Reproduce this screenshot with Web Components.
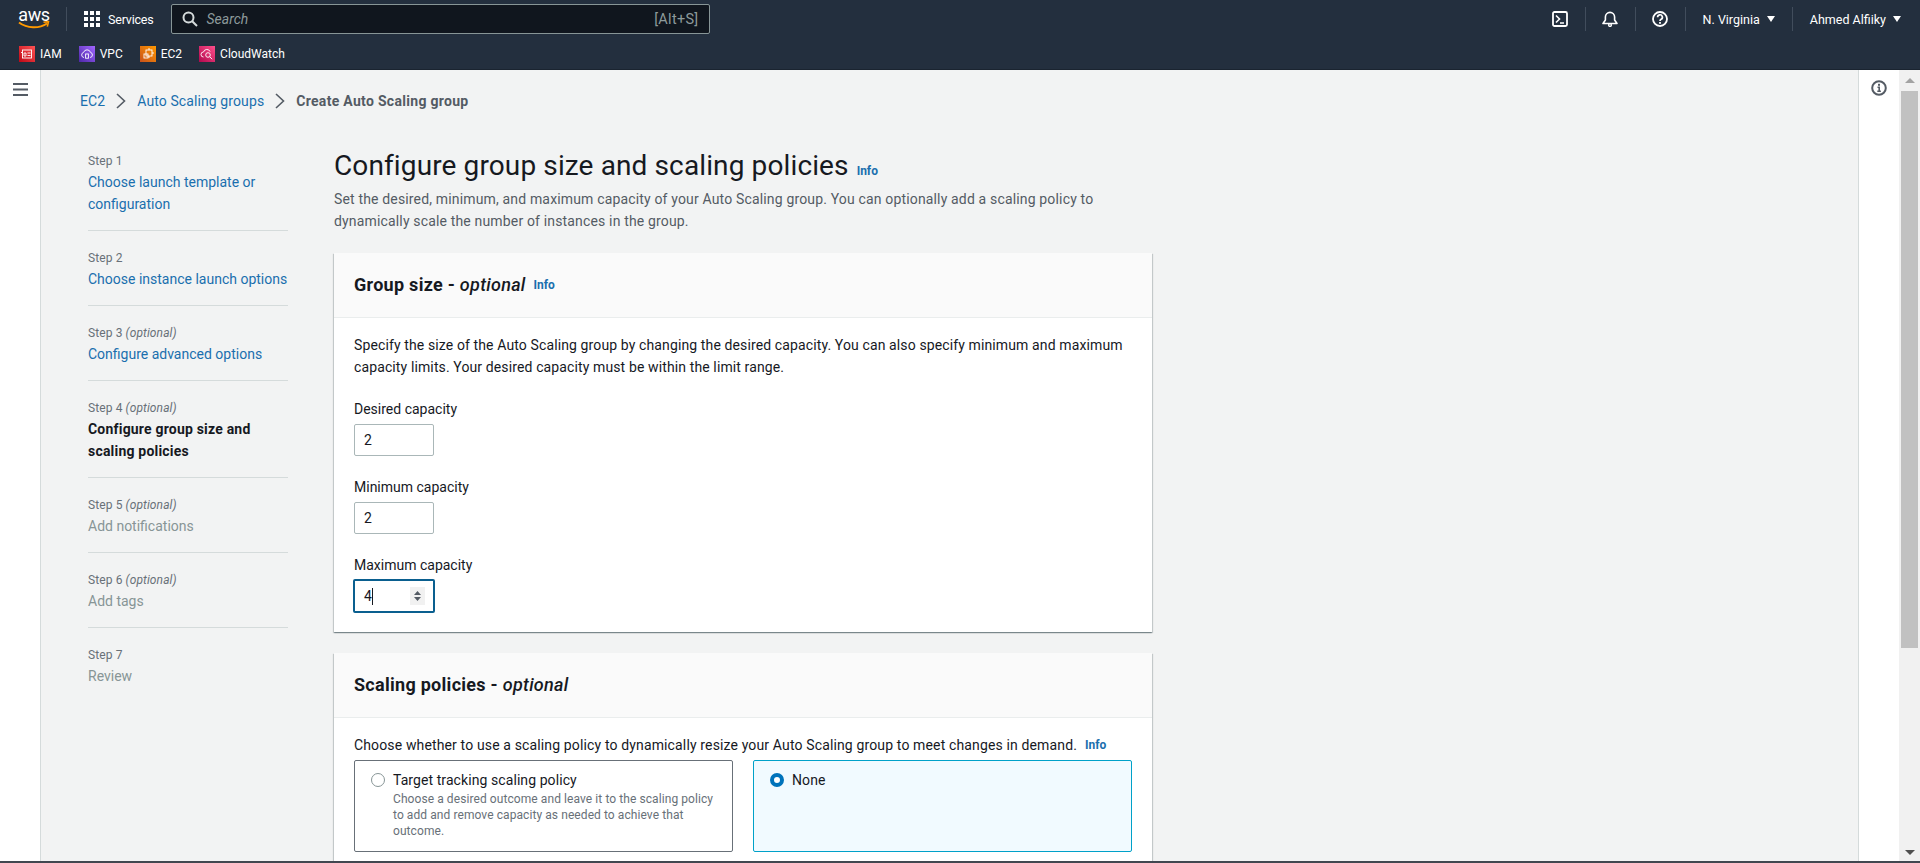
<!DOCTYPE html>
<html>
<head>
<meta charset="utf-8">
<title>Create Auto Scaling group</title>
<style>
html,body{margin:0;height:100%;overflow:hidden;}
body{font-family:Roboto,"Liberation Sans",sans-serif;font-size:14px;color:#16191f;background:#f2f3f3;display:flex;flex-direction:column;height:863px;}
p.copy{letter-spacing:.12px;}
</style>
</head>
<body>
<aws-topnav></aws-topnav>
<aws-favbar>
  <fav-item label="IAM" c1="#bd0816" c2="#ff5252" glyph="iam"></fav-item>
  <fav-item label="VPC" c1="#4d27a8" c2="#a166ff" glyph="vpc"></fav-item>
  <fav-item label="EC2" c1="#c8511b" c2="#ff9900" glyph="ec2"></fav-item>
  <fav-item label="CloudWatch" c1="#b0084d" c2="#ff4f8b" glyph="cw"></fav-item>
</aws-favbar>
<app-shell>
  <bread-crumbs></bread-crumbs>
  <wizard-steps>
    <wizard-step step="Step 1" link>Choose launch template or configuration</wizard-step>
    <wizard-step step="Step 2" link>Choose instance launch options</wizard-step>
    <wizard-step step="Step 3" optional link>Configure advanced options</wizard-step>
    <wizard-step step="Step 4" optional current>Configure group size and scaling policies</wizard-step>
    <wizard-step step="Step 5" optional>Add notifications</wizard-step>
    <wizard-step step="Step 6" optional>Add tags</wizard-step>
    <wizard-step step="Step 7" last>Review</wizard-step>
  </wizard-steps>
  <form-page>
    <aws-card heading="Group size" info>
      <p class="copy">Specify the size of the Auto Scaling group by changing the desired capacity. You can also specify minimum and maximum capacity limits. Your desired capacity must be within the limit range.</p>
      <cap-field label="Desired capacity" value="2"></cap-field>
      <cap-field label="Minimum capacity" value="2"></cap-field>
      <cap-field label="Maximum capacity" value="4" focused></cap-field>
    </aws-card>
    <aws-card heading="Scaling policies">
      <policy-chooser></policy-chooser>
    </aws-card>
  </form-page>
</app-shell>
<script>
const chevron = `<svg width="10" height="16" viewBox="0 0 10 16" fill="none" stroke="#545b64" stroke-width="1.6"><path d="M1 1l7.5 7L1 15"/></svg>`;

class AwsTopnav extends HTMLElement{
    constructor(){
        super();
        this.attachShadow({mode:"open"}).innerHTML = `
        <style>
        :host{display:flex;align-items:center;height:40px;padding-bottom:2px;box-sizing:border-box;background:#232f3e;color:#fff;font-size:12.5px;flex:none;}
        .logo{width:32px;height:24px;margin-left:18px;margin-right:16px;position:relative;flex:none;display:flex;justify-content:center;}
        .logo span{font:400 18px/18px Roboto,sans-serif;letter-spacing:-.3px;margin-top:-1px;}
        .logo svg{position:absolute;left:0;top:14px;}
        .sep{width:1px;height:24px;background:#414d5c;flex:none;}
        .services{display:flex;align-items:center;gap:8px;margin:0 17px;letter-spacing:-.2px;}
        .search{width:537px;height:28px;border:1px solid #879596;border-radius:2px;background:#10161e;display:flex;align-items:center;flex:none;}
        .search svg{margin:0 9px 0 10px;}
        .search i{color:#8d9a9b;flex:1;font-size:14px;}
        .search b{font-weight:400;color:#8d9a9b;margin-right:10px;font-size:14.5px;letter-spacing:.3px;}
        .right{margin-left:auto;display:flex;align-items:center;}
        .ico{width:50px;display:flex;justify-content:center;align-items:center;height:24px;border-right:1px solid #414d5c;box-sizing:border-box;}
        .menu{display:flex;align-items:center;gap:7px;height:24px;}
        .region{padding:0 17px;border-right:1px solid #414d5c;}
        .user{padding:0 19px 0 17px;}
        .caret{width:0;height:0;border:4px solid transparent;border-top:6px solid #fff;border-bottom:0;}
        </style>
        <div class="logo"><span>aws</span><svg width="32" height="10" viewBox="0 0 32 10" fill="none"><path d="M1 1.5C9 7.5 21 8 29 2.5" stroke="#f90" stroke-width="2"/><path d="M25.5 1.2l5-.6-1.2 5" stroke="#f90" stroke-width="1.6"/></svg></div>
        <div class="sep"></div>
        <div class="services">
          <svg width="16" height="16" viewBox="0 0 16 16" fill="#fff"><rect width="4" height="4"/><rect x="6" width="4" height="4"/><rect x="12" width="4" height="4"/><rect y="6" width="4" height="4"/><rect x="6" y="6" width="4" height="4"/><rect x="12" y="6" width="4" height="4"/><rect y="12" width="4" height="4"/><rect x="6" y="12" width="4" height="4"/><rect x="12" y="12" width="4" height="4"/></svg>
          <span>Services</span>
        </div>
        <div class="search">
          <svg width="16" height="16" viewBox="0 0 16 16" fill="none" stroke="#d5dbdb" stroke-width="2"><circle cx="6.5" cy="6.5" r="5"/><path d="M10.2 10.2L15 15"/></svg>
          <i>Search</i><b>[Alt+S]</b>
        </div>
        <div class="right">
          <div class="ico"><svg width="16" height="16" viewBox="0 0 16 16" fill="none" stroke="#fff" stroke-width="1.8"><rect x="1" y="1" width="14" height="14" rx="1.5"/><path d="M4 4.5L7.5 8 4 11.5M8 12h4" stroke-width="1.6"/></svg></div>
          <div class="ico"><svg width="16" height="16" viewBox="0 0 16 16" fill="none" stroke="#fff" stroke-width="1.6"><path d="M1 12.5h14L12.6 9V6a4.6 4.6 0 0 0-9.2 0v3z" stroke-linejoin="round"/><circle cx="8" cy="14" r="1.4" stroke-width="1.4"/></svg></div>
          <div class="ico"><svg width="16" height="16" viewBox="0 0 16 16" fill="none" stroke="#fff" stroke-width="1.8"><circle cx="8" cy="8" r="7"/><path d="M5.6 6.2a2.4 2.4 0 1 1 3.5 2.1c-.8.4-1.1.8-1.1 1.7" stroke-width="1.7"/><rect x="7.1" y="11" width="1.8" height="1.8" fill="#fff" stroke="none"/></svg></div>
          <div class="menu region"><span>N. Virginia</span><span class="caret"></span></div>
          <div class="menu user"><span>Ahmed Alfiiky</span><span class="caret"></span></div>
        </div>`;
    }
}
customElements.define("aws-topnav",AwsTopnav);

class AwsFavbar extends HTMLElement{
    constructor(){
        super();
        this.attachShadow({mode:"open"}).innerHTML = `
        <style>
        :host{display:flex;align-items:center;gap:17px;height:28px;padding:0 0 1px 19px;background:#232f3e;border-bottom:1px solid #1a2430;flex:none;}
        </style>
        <slot></slot>`;
    }
}
customElements.define("aws-favbar",AwsFavbar);

class FavItem extends HTMLElement{
    constructor(){
        super();
        const glyphs = {
            iam:`<rect x="3.5" y="4" width="9" height="8"/><path d="M5 7h2v3H5zM8.5 7h3M8.5 9.5h3M2 6.5h1.5"/>`,
            vpc:`<path d="M5 11.5a2.6 2.6 0 0 1-.4-5.1 3.6 3.6 0 0 1 6.9 0 2.6 2.6 0 0 1-.4 5.1"/><rect x="6.6" y="8" width="2.8" height="4.2"/>`,
            ec2:`<rect x="6" y="4" width="6" height="6"/><rect x="4" y="8" width="4" height="4"/><path d="M9 2v2M9 10v2M12 7h2"/>`,
            cw:`<path d="M4.5 11a2.5 2.5 0 0 1 0-5 3.5 3.5 0 0 1 6.6-.4"/><circle cx="9" cy="9" r="2.3"/><path d="M10.7 10.7l2.5 2.5"/>`
        };
        const id = this.getAttribute("glyph");
        this.attachShadow({mode:"open"}).innerHTML = `
        <style>
        :host{display:flex;align-items:center;gap:5px;color:#fff;font-size:12px;}
        </style>
        <svg width="16" height="16" viewBox="0 0 16 16">
          <defs><linearGradient id="g" x1="0" y1="1" x2="1" y2="0"><stop offset="0" stop-color="${this.getAttribute("c1")}"/><stop offset="1" stop-color="${this.getAttribute("c2")}"/></linearGradient></defs>
          <rect width="16" height="16" fill="url(#g)"/>
          <g fill="none" stroke="#fff" stroke-width=".9">${glyphs[id]}</g>
        </svg>
        <span>${this.getAttribute("label")}</span>`;
    }
}
customElements.define("fav-item",FavItem);

// everything below the header: left rail, content, right rail, scrollbar
class AppShell extends HTMLElement{
    constructor(){
        super();
        this.attachShadow({mode:"open"}).innerHTML = `
        <style>
        :host{display:flex;flex:1;min-height:0;border-bottom:2px solid #414750;overflow:hidden;}
        .left{width:41px;background:#fff;border-right:1px solid #d5dbdb;flex:none;display:flex;justify-content:center;padding-top:13px;box-sizing:border-box;}
        .main{flex:1;min-width:0;padding:0 39px;overflow:hidden;}
        .cols{display:flex;gap:46px;padding-top:37px;}
        .rail{width:41px;background:#fff;border-left:1px solid #d5dbdb;flex:none;display:flex;justify-content:center;padding-top:10px;box-sizing:border-box;}
        .bar{width:21px;background:#f1f1f1;flex:none;display:flex;flex-direction:column;align-items:center;padding-top:8px;box-sizing:border-box;}
        .up,.down{width:0;height:0;border:5px solid transparent;border-top:0;border-bottom:5px solid #a3a3a3;flex:none;}
        .thumb{width:17px;height:557px;background:#c1c1c1;margin-top:8px;flex:none;}
        .down{border-bottom:0;border-top:5px solid #505050;margin-top:auto;margin-bottom:6px;}
        </style>
        <div class="left"><svg width="15" height="13" viewBox="0 0 15 13" fill="#545b64"><rect width="15" height="2"/><rect y="5.5" width="15" height="2"/><rect y="11" width="15" height="2"/></svg></div>
        <div class="main"><slot name="crumbs"></slot>
          <div class="cols"><slot></slot></div>
        </div>
        <div class="rail"><svg width="16" height="16" viewBox="0 0 16 16" fill="none" stroke="#545b64" stroke-width="2"><circle cx="8" cy="8" r="6.8"/><path d="M6.5 7.2H8.2v4M6.3 11.3h3.6" stroke-width="1.6"/><rect x="7" y="3.8" width="2" height="2" fill="#545b64" stroke="none"/></svg></div>
        <div class="bar"><span class="up"></span><span class="thumb"></span><span class="down"></span></div>`;
        this.querySelector("bread-crumbs").slot = "crumbs";
    }
}

class BreadCrumbs extends HTMLElement{
    constructor(){
        super();
        this.attachShadow({mode:"open"}).innerHTML = `
        <style>
        :host{display:flex;align-items:center;gap:11px;height:22px;margin-top:20px;line-height:22px;}
        a{color:#1a6fae;text-decoration:none;letter-spacing:.1px;}
        b{color:#545b64;font-weight:700;letter-spacing:.3px;}
        svg{flex:none;}
        </style>
        <a href="#">EC2</a>${chevron}<a href="#">Auto Scaling groups</a>${chevron}<b>Create Auto Scaling group</b>`;
    }
}
customElements.define("bread-crumbs",BreadCrumbs);
customElements.define("app-shell",AppShell);

class WizardSteps extends HTMLElement{
    constructor(){
        super();
        this.attachShadow({mode:"open"}).innerHTML = `
        <style>
        :host{display:flex;flex-direction:column;width:200px;flex:none;margin-left:8px;padding-top:4px;}
        </style>
        <slot></slot>`;
    }
}
customElements.define("wizard-steps",WizardSteps);

class WizardStep extends HTMLElement{
    constructor(){
        super();
        const opt = this.hasAttribute("optional") ? ` <i>(optional)</i>` : "";
        this.attachShadow({mode:"open"}).innerHTML = `
        <style>
        :host{display:block;padding-bottom:15px;margin-bottom:19px;border-bottom:1px solid #d5dbdb;line-height:22px;color:#879596;}
        :host([last]){border-bottom:0;}
        :host([link]) .name{color:#1a6fae;}
        :host([current]) .name{color:#16191f;font-weight:700;letter-spacing:.2px;}
        .step{font-size:12px;line-height:16px;color:#687078;margin-bottom:2px;letter-spacing:.1px;}
        </style>
        <div class="step">${this.getAttribute("step")}${opt}</div>
        <div class="name"><slot></slot></div>`;
    }
}
customElements.define("wizard-step",WizardStep);

class InfoLink extends HTMLElement{
    constructor(){
        super();
        this.attachShadow({mode:"open"}).innerHTML = `
        <style>
        :host{display:inline-block;color:#1a6fae;font-size:12px;font-weight:700;font-style:normal;line-height:16px;letter-spacing:0;}
        </style>
        Info`;
    }
}
customElements.define("info-link",InfoLink);

class FormPage extends HTMLElement{
    constructor(){
        super();
        this.attachShadow({mode:"open"}).innerHTML = `
        <style>
        :host{display:block;width:818px;flex:none;}
        h1{font-size:28px;font-weight:400;line-height:36px;margin:-1px 0 0;display:flex;align-items:baseline;gap:8px;letter-spacing:.12px;}
        p{margin:4px 0 21px;line-height:22px;color:#545b64;letter-spacing:.16px;}
        </style>
        <h1>Configure group size and scaling policies <info-link></info-link></h1>
        <p>Set the desired, minimum, and maximum capacity of your Auto Scaling group. You can optionally add a scaling policy to dynamically scale the number of instances in the group.</p>
        <slot></slot>`;
    }
}
customElements.define("form-page",FormPage);

class AwsCard extends HTMLElement{
    constructor(){
        super();
        const info = this.hasAttribute("info") ? `<info-link></info-link>` : "";
        this.attachShadow({mode:"open"}).innerHTML = `
        <style>
        :host{display:block;background:#fff;margin-bottom:21px;box-shadow:0 1px 1px 0 rgba(0,28,36,.3),1px 1px 1px 0 rgba(0,28,36,.15),-1px 1px 1px 0 rgba(0,28,36,.15);}
        header{height:64px;background:#fafafa;border-bottom:1px solid #eaeded;padding:0 20px;display:flex;align-items:center;gap:8px;}
        h2{font-size:18px;line-height:22px;font-weight:700;margin:0;letter-spacing:.28px;}
        h2 i{font-weight:500;}
        .body{padding:16px 20px 20px;}
        ::slotted(p.copy){margin:0;line-height:22px;}
        </style>
        <header><h2>${this.getAttribute("heading")} - <i>optional</i></h2>${info}</header>
        <div class="body"><slot></slot></div>`;
    }
}
customElements.define("aws-card",AwsCard);

class CapField extends HTMLElement{
    constructor(){
        super();
        const focused = this.hasAttribute("focused");
        const extra = focused ? `<span class="caret"></span><span class="spin"><svg width="15" height="18" viewBox="0 0 15 18" fill="#545b64"><path d="M7.5 4l3.5 4H4zM7.5 14L11 10H4z"/></svg></span>` : "";
        this.attachShadow({mode:"open"}).innerHTML = `
        <style>
        :host{display:block;margin-top:20px;}
        label{display:block;line-height:22px;margin-bottom:4px;}
        .box{width:80px;height:32px;box-sizing:border-box;border:1px solid #aab7b8;border-radius:2px;background:#fff;display:flex;align-items:center;padding-left:9px;}
        :host([focused]) .box{height:34px;width:82px;margin:-1px;border:2px solid #0a5f8f;padding-left:9px;}
        .caret{width:1px;height:17px;background:#16191f;}
        .spin{margin-left:auto;margin-right:8px;background:#f1f1f1;display:flex;height:18px;}
        </style>
        <label>${this.getAttribute("label")}</label>
        <div class="box"><span>${this.getAttribute("value")}</span>${extra}</div>`;
    }
}
customElements.define("cap-field",CapField);

class PolicyChooser extends HTMLElement{
    constructor(){
        super();
        this.attachShadow({mode:"open"}).innerHTML = `
        <style>
        :host{display:block;}
        .lead{line-height:22px;display:flex;align-items:center;gap:8px;letter-spacing:.14px;}
        .tiles{display:grid;grid-template-columns:379px 379px;gap:20px;margin-top:4px;}
        </style>
        <div class="lead"><span>Choose whether to use a scaling policy to dynamically resize your Auto Scaling group to meet changes in demand.</span><info-link></info-link></div>
        <div class="tiles">
          <policy-tile label="Target tracking scaling policy" desc="Choose a desired outcome and leave it to the scaling policy to add and remove capacity as needed to achieve that outcome."></policy-tile>
          <policy-tile label="None" selected></policy-tile>
        </div>`;
    }
}
customElements.define("policy-chooser",PolicyChooser);

class PolicyTile extends HTMLElement{
    constructor(){
        super();
        const desc = this.getAttribute("desc");
        this.attachShadow({mode:"open"}).innerHTML = `
        <style>
        :host{display:flex;gap:8px;height:92px;box-sizing:border-box;border:1px solid #687078;border-radius:2px;background:#fff;padding:8px 16px 0 16px;letter-spacing:.08px;}
        :host([selected]){border-color:#00a1c9;background:#f1faff;}
        .dot{width:14px;height:14px;box-sizing:border-box;border:1px solid #879596;border-radius:50%;background:#fff;margin-top:4px;flex:none;}
        :host([selected]) .dot{border:4px solid #0073bb;}
        .label{line-height:22px;}
        .desc{font-size:12px;line-height:16px;color:#687078;}
        </style>
        <span class="dot"></span>
        <div><div class="label">${this.getAttribute("label")}</div>${desc ? `<div class="desc">${desc}</div>` : ""}</div>`;
    }
}
customElements.define("policy-tile",PolicyTile);
</script>
</body>
</html>
